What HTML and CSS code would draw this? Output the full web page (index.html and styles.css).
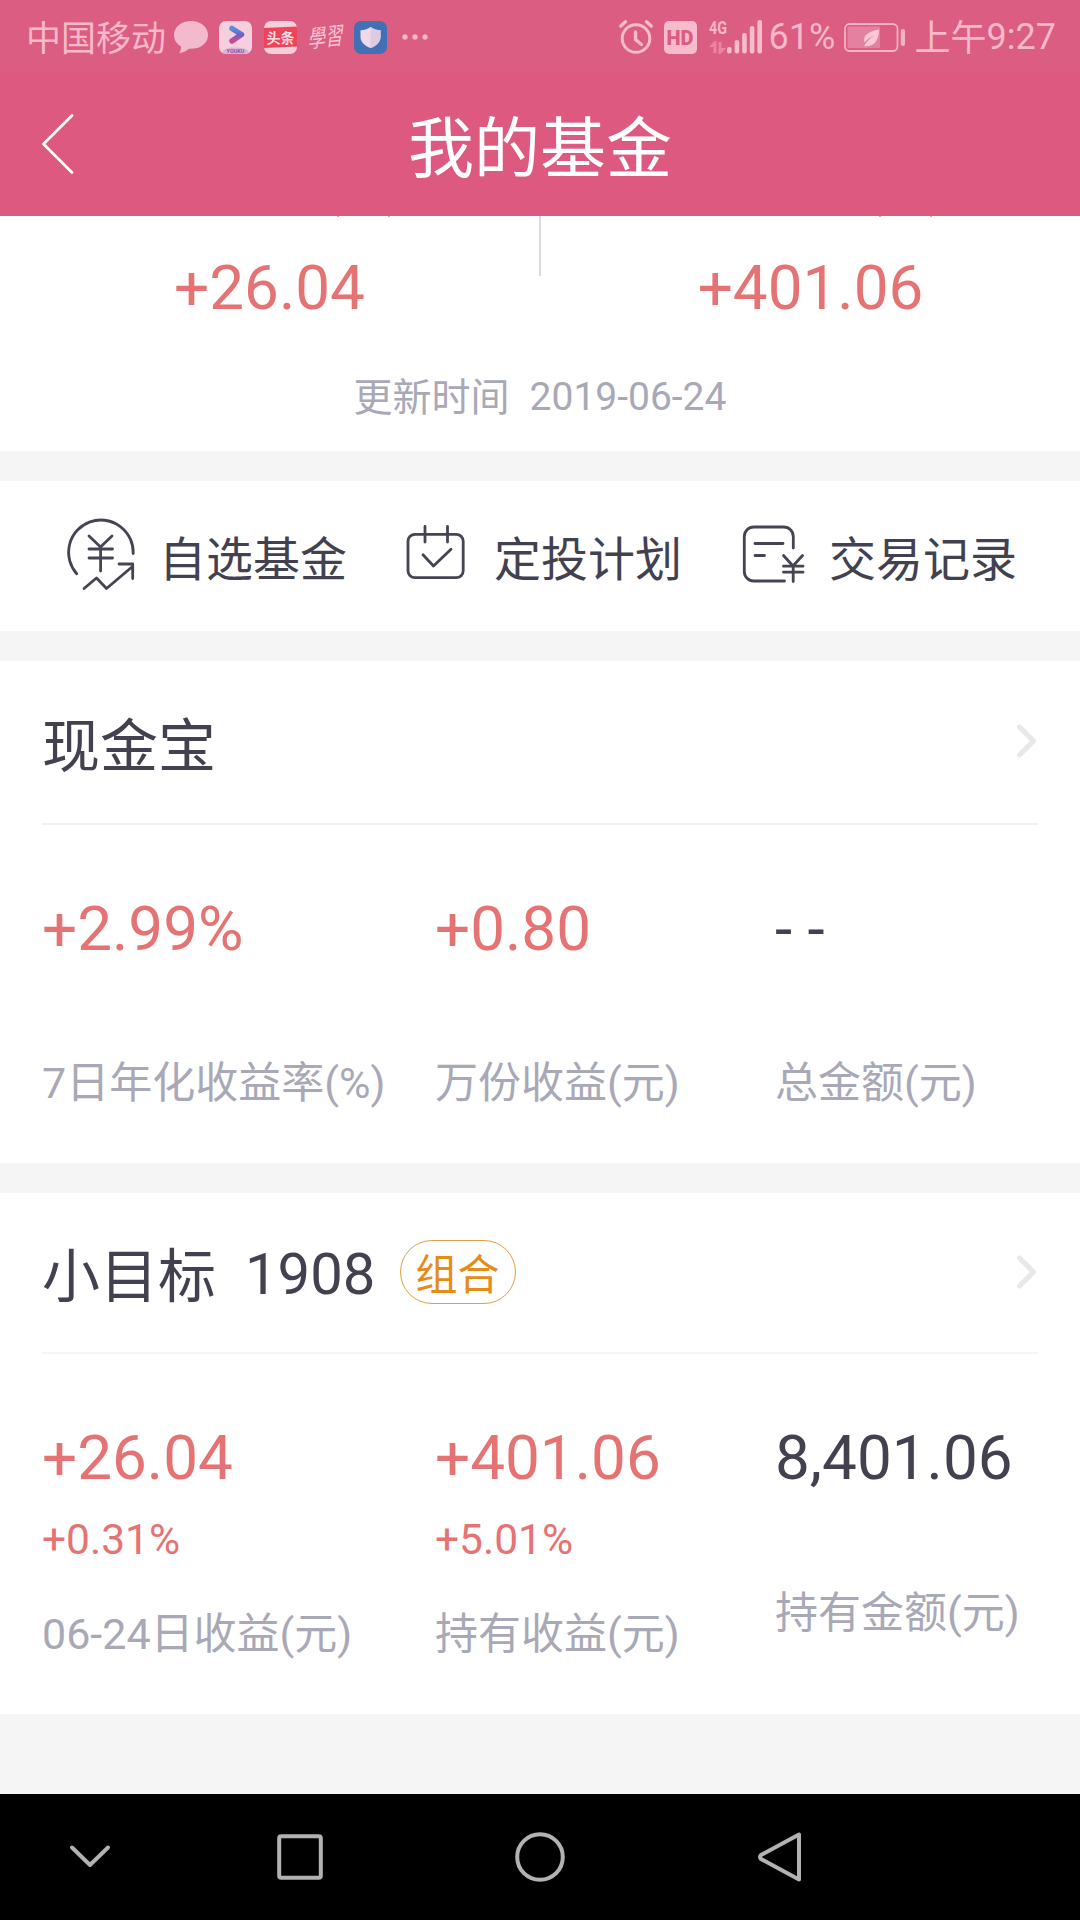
FILE: index.html
```html
<!DOCTYPE html>
<html lang="zh-CN">
<head>
<meta charset="utf-8">
<title>我的基金</title>
<link rel="stylesheet" href="styles.css">
</head>
<body>
<div class="screen">
  <div class="status">
    <span class="carrier">中国移动</span>
    <svg class="ic-bubble" width="34" height="33" viewBox="0 0 34 33"><path d="M17 0C7.500 0 0 6 0 14c0 5 2.600 9 7 11.500C7.200 28 6.500 30.500 5 32c4 0 7.500-2 10-4.200C25.500 28.500 34 23 34 14 34 6 26.500 0 17 0z" fill="#f2bacc"/></svg>
    <svg class="ic-app" width="33" height="33" viewBox="0 0 33 33">
      <defs>
        <linearGradient id="yk" x1="0" y1="0" x2="0" y2="1"><stop offset="0" stop-color="#5b8fe0"/><stop offset=".5" stop-color="#6a62c4"/><stop offset="1" stop-color="#d0468e"/></linearGradient>
        <clipPath id="round"><rect width="33" height="33" rx="7"/></clipPath>
      </defs>
      <g clip-path="url(#round)">
        <rect width="33" height="33" fill="#f6cfdf"/>
        <ellipse cx="16.500" cy="31" rx="13" ry="4.500" fill="#dcb4d2"/>
        <path d="M13 7.500 22.500 13.500 13 20" fill="none" stroke="url(#yk)" stroke-width="5.500" stroke-linecap="round" stroke-linejoin="round"/>
      </g>
      <text x="16.500" y="31.500" class="yk-text">YOUKU</text>
    </svg>
    <svg class="ic-app" width="33" height="33" viewBox="0 0 33 33">
      <g clip-path="url(#round)">
        <rect width="33" height="33" fill="#f6cfdc"/>
        <path d="M0 7 33 5.500V25.500L0 27z" fill="#ee4459"/>
      </g>
      <text x="16.500" y="21.500" class="tt-text">头条</text>
    </svg>
    <svg class="script-logo" width="38" height="33" viewBox="0 0 38 33"><text x="0" y="0" transform="translate(1 27) rotate(-7) skewX(-14) scale(.88 1.200)">學習</text></svg>
    <svg class="ic-shield" width="33" height="33" viewBox="0 0 33 33"><rect width="33" height="33" rx="7" fill="#4270b4"/><path d="M16.500 6c3 2.200 6.500 3.200 10 3.300V16c0 5.500-4.500 9-10 11-5.500-2-10-5.500-10-11V9.300C10 9.200 13.500 8.200 16.500 6z" fill="#eed9ea"/><path d="M16.500 6c3 2.200 6.500 3.200 10 3.300V16c0 5.500-4.500 9-10 11z" fill="#dccbe2"/></svg>
    <svg class="ic-more" width="26" height="6" viewBox="0 0 26 6" fill="#f2b4c6"><circle cx="3" cy="3" r="2.700"/><circle cx="13" cy="3" r="2.700"/><circle cx="23" cy="3" r="2.700"/></svg>

    <div class="status-right">
      <svg width="34" height="34" viewBox="0 0 34 34" fill="none" stroke="#f6bccd" stroke-linecap="round"><circle cx="17" cy="18.500" r="13.800" stroke-width="3"/><path d="M16.500 12v7.500l6 5" stroke-width="3.400" stroke-linejoin="round"/><path d="M1.800 6 6.500 1.800M32.200 6 27.500 1.800" stroke-width="3.400"/></svg>
      <span class="hd">HD</span>
      <div class="net">
        <span class="g4">4G</span>
        <svg width="17" height="13" viewBox="0 0 17 13" fill="#e985a4"><path d="M0 6 5.500 0H7.500V12H4.500V6zM17 7 11.500 13H9.500V1h3V7z"/></svg>
      </div>
      <svg class="ic-bars" width="35" height="34" viewBox="0 0 35 34" fill="#f6bccd"><rect x="0" y="27" width="4.600" height="6.500" rx="2"/><rect x="7.600" y="20" width="4.600" height="13.500" rx="2"/><rect x="15.200" y="13" width="4.600" height="20.500" rx="2"/><rect x="22.800" y="6" width="4.600" height="27.500" rx="2"/><rect x="30.400" y="0" width="4.600" height="33.500" rx="2"/></svg>
      <span class="pct">61%</span>
      <svg class="ic-batt" width="62" height="29" viewBox="0 0 62 29"><rect x="1" y="1" width="52.500" height="27" rx="4.500" fill="none" stroke="#f3b3c6" stroke-width="1.800"/><rect x="3.500" y="3.500" width="32.500" height="21.500" rx="1" fill="#e581a0"/><path d="M35 6.500C25 8.500 18.500 12 20.500 19.500c3-3.500 6-5.500 9.500-7-4 3-7.500 6-10 10.500 8 1.500 15-3.500 15-16.500z" fill="#f9c9d7"/><rect x="56.800" y="6" width="4.200" height="17" rx="2" fill="#f3b3c6"/></svg>
      <span class="ampm">上午</span><span class="clock">9:27</span>
    </div>
  </div>

  <header class="header">
    <svg class="back" width="34" height="62" viewBox="0 0 34 62"><path d="M31 2.500 2.500 31 31 59.500" fill="none" stroke="#fff" stroke-width="2.800" stroke-linecap="round" stroke-linejoin="round"/></svg>
    <h1 class="title">我的基金</h1>
  </header>

  <section class="summary">
    <div class="totals">
      <div class="total"><div class="ticks"><i></i><i></i></div><div class="num red">+26.04</div></div>
      <div class="divider"></div>
      <div class="total"><div class="ticks"><i></i><i></i></div><div class="num red">+401.06</div></div>
    </div>
    <div class="updated"><span>更新时间</span><span class="date">2019-06-24</span></div>
  </section>

  <nav class="actions">
    <a class="action a1">
      <svg width="72" height="72" viewBox="0 0 72 72"><path d="M67.200 34.500A32.300 32.300 0 1 0 10.700 54.700"/><path d="M23 17 34.500 28 46 17M23 30H46.500M23 39H46.500M34.600 28V52"/><path d="M18 69.500 30.500 59 40.500 69.500 66.500 47.500M53 45H66.700V59.500"/></svg>
      <span>自选基金</span>
    </a>
    <a class="action a2">
      <svg width="60" height="72" viewBox="0 0 60 72"><rect x="2" y="16.300" width="55.200" height="43.400" rx="7"/><path d="M19 8.500V24M41.500 8.500V24M17 36.800 27.500 48 45 31.300"/></svg>
      <span>定投计划</span>
    </a>
    <a class="action a3">
      <svg width="64" height="72" viewBox="0 0 64 72"><path d="M51.300 30V18.500A9.500 9.500 0 0 0 41.800 9H11.800A9.500 9.500 0 0 0 2.300 18.500V53.500A9.500 9.500 0 0 0 11.800 63H42.500"/><path d="M13 25.500H41M13 37.500H22.500"/><path d="M41.500 37.500 51 48 60.500 37.500M41.500 48.200H61M41.500 54.200H61M51.200 48V63.500"/></svg>
      <span>交易记录</span>
    </a>
  </nav>

  <section class="card">
    <div class="card-head">
      <h2>现金宝</h2>
      <svg class="chev" width="22" height="34" viewBox="0 0 22 34"><path d="M3.500 3 17.500 17 3.500 31"/></svg>
    </div>
    <div class="stats one">
      <div><div class="num red">+2.99%</div><div class="label">7日年化收益率(%)</div></div>
      <div><div class="num red">+0.80</div><div class="label">万份收益(元)</div></div>
      <div><div class="num dashes">- -</div><div class="label">总金额(元)</div></div>
    </div>
  </section>

  <section class="card second">
    <div class="card-head">
      <h2>小目标</h2>
      <span class="code">1908</span>
      <span class="tag">组合</span>
      <svg class="chev" width="22" height="34" viewBox="0 0 22 34"><path d="M3.500 3 17.500 17 3.500 31"/></svg>
    </div>
    <div class="stats two">
      <div><div class="num red">+26.04</div><div class="sub red">+0.31%</div><div class="label">06-24日收益(元)</div></div>
      <div><div class="num red">+401.06</div><div class="sub red">+5.01%</div><div class="label">持有收益(元)</div></div>
      <div><div class="num">8,401.06</div><div class="label amount">持有金额(元)</div></div>
    </div>
  </section>

  <footer class="navbar">
    <svg class="n1" width="42" height="26" viewBox="0 0 42 26"><path d="M3 3.500 21 21 39 3.500"/></svg>
    <svg class="n2" width="46" height="46" viewBox="0 0 46 46"><rect x="2.200" y="2.200" width="41.600" height="41.600" rx="2"/></svg>
    <svg class="n3" width="50" height="50" viewBox="0 0 50 50"><circle cx="25" cy="25" r="22.800"/></svg>
    <svg class="n4" width="46" height="52" viewBox="0 0 46 52"><path d="M42 3.500V48.500L4 28Q2 26 4 24z"/></svg>
  </footer>
</div>
</body>
</html>
```

FILE: styles.css
```css
* { box-sizing: border-box; margin: 0; padding: 0; }

body {
  width: 1080px;
  height: 1920px;
  overflow: hidden;
  background: #f5f5f5;
  color: #43414f;
  font-family: Roboto, "Noto Sans CJK SC", sans-serif;
}

svg { display: block; flex: none; overflow: visible; }

.screen { display: flex; flex-direction: column; height: 1920px; }

/* status bar */
.status {
  display: flex;
  align-items: center;
  height: 72px;
  padding: 2px 24px 0 26px;
  background: #db5d81;
  color: #f6b8ca;
  font-size: 36px;
  line-height: 72px;
  white-space: nowrap;
}
.carrier { width: 148px; padding-top: 5px; font-size: 35px; }
.ic-bubble { margin-right: 11px; }
.ic-app { margin-right: 12px; }
.yk-text { font: bold 5.500px Roboto, sans-serif; text-anchor: middle; fill: #8a4fae; }
.tt-text { font: bold 14px "Noto Sans CJK SC", sans-serif; text-anchor: middle; fill: #fbdfe5; }
.script-logo { margin-right: 9px; margin-left: -2px; fill: #f8c4d3; font: 20px "Noto Sans CJK TC", sans-serif; }
.ic-shield { margin-right: 15px; }
.status-right { display: flex; align-items: center; margin-left: auto; }
.hd {
  width: 33px;
  height: 33px;
  margin: 0 12px 0 11px;
  border-radius: 5px;
  background: #f6bccd;
  color: #db5d81;
  font: 900 20px/34px Roboto, sans-serif;
  text-align: center;
}
.net { display: flex; flex-direction: column; gap: 4px; width: 18px; height: 36px; }
.g4 { font: bold 18px/18px Roboto, sans-serif; transform: scaleX(.8); transform-origin: 0 0; }
.ic-bars { margin-right: 7px; }
.pct { width: 75px; }
.ic-batt { margin-right: 9px; }
.ampm { padding-top: 4px; }

/* title bar */
.header {
  display: grid;
  grid-template-columns: 1fr auto 1fr;
  align-items: center;
  height: 144px;
  background: #de5980;
  color: #fff;
}
.back { margin-left: 41px; }
.title { height: 144px; padding-top: 6px; font-size: 66px; font-weight: 400; line-height: 144px; }

/* totals */
.summary { height: 235px; background: #fff; }
.totals { display: flex; height: 140px; }
.total { flex: 1; text-align: center; }
.total .num { line-height: 141px; }
.divider { width: 2px; height: 60px; background: #dcdce0; }
.ticks { display: flex; justify-content: center; gap: 49px; height: 1px; padding-left: 188px; }
.total:last-child .ticks { padding-left: 189px; }
.ticks i { width: 2px; height: 1px; background: #e6a5b0; }
.updated {
  display: flex;
  justify-content: center;
  gap: 20px;
  color: #a9a8b7;
  font-size: 39px;
  line-height: 82px;
}
.updated span:first-child { padding-top: 1px; }

.num { font-size: 62px; white-space: nowrap; }
.red { color: #e67373; }

/* shortcuts */
.actions { display: flex; height: 150px; margin-top: 30px; padding-left: 66px; background: #fff; }
.action { display: flex; align-items: flex-start; padding-top: 37px; font-size: 47px; }
.action span { padding-top: 2px; line-height: 80px; white-space: nowrap; }
.action svg { fill: none; stroke: #464452; stroke-width: 2.800; stroke-linecap: round; stroke-linejoin: round; }
.a1 { width: 340px; gap: 21px; }
.a1 svg { margin-top: 1px; }
.a2 { width: 336px; gap: 28px; }
.a3 { gap: 23px; }

/* fund cards */
.card { height: 502px; margin-top: 30px; padding: 0 42px; background: #fff; }
.card-head { display: flex; align-items: center; height: 164px; border-bottom: 2px solid #f0f0f1; }
.card-head h2 { height: 162px; padding-top: 5px; font-size: 58px; font-weight: 400; line-height: 162px; white-space: nowrap; }
.chev { margin: 0 0 2px auto; fill: none; stroke: #e8e8ea; stroke-width: 5; stroke-linecap: round; stroke-linejoin: round; }
.stats { display: grid; grid-template-columns: 393px 340px 1fr; }
.stats .num { line-height: 100px; }
.label { font-size: 43px; line-height: 60px; color: #a9a8b7; white-space: nowrap; }
.one { padding-top: 54px; }
.one .label { margin-top: 74px; }

.second { height: 521px; }
.second .card-head { height: 161px; border-color: #f5f5f6; }
.second .card-head h2 { height: 159px; line-height: 159px; }
.code { height: 159px; margin-left: 29px; padding-top: 2px; font-size: 58px; line-height: 159px; }
.tag {
  width: 116px;
  height: 64px;
  margin: 0 0 2px 25px;
  padding-right: 2px;
  border: 1.500px solid #e3a040;
  border-radius: 32px;
  color: #e78b17;
  font-size: 42px;
  line-height: 70px;
  text-align: center;
}
.two { padding-top: 54px; }
.sub { margin-top: 2px; font-size: 42.500px; line-height: 60px; }
.two .label { margin-top: 34px; }
.two .amount { margin-top: 75px; }

/* system navigation */
.navbar {
  display: flex;
  align-items: center;
  height: 126px;
  margin-top: auto;
  padding-left: 69px;
  background: #000;
}
.navbar svg { fill: none; stroke: #b2b2b2; stroke-width: 4; stroke-linecap: round; stroke-linejoin: round; }
.n2 { margin-left: 166px; }
.n3 { margin-left: 192px; }
.n4 { margin-left: 192px; }
```
